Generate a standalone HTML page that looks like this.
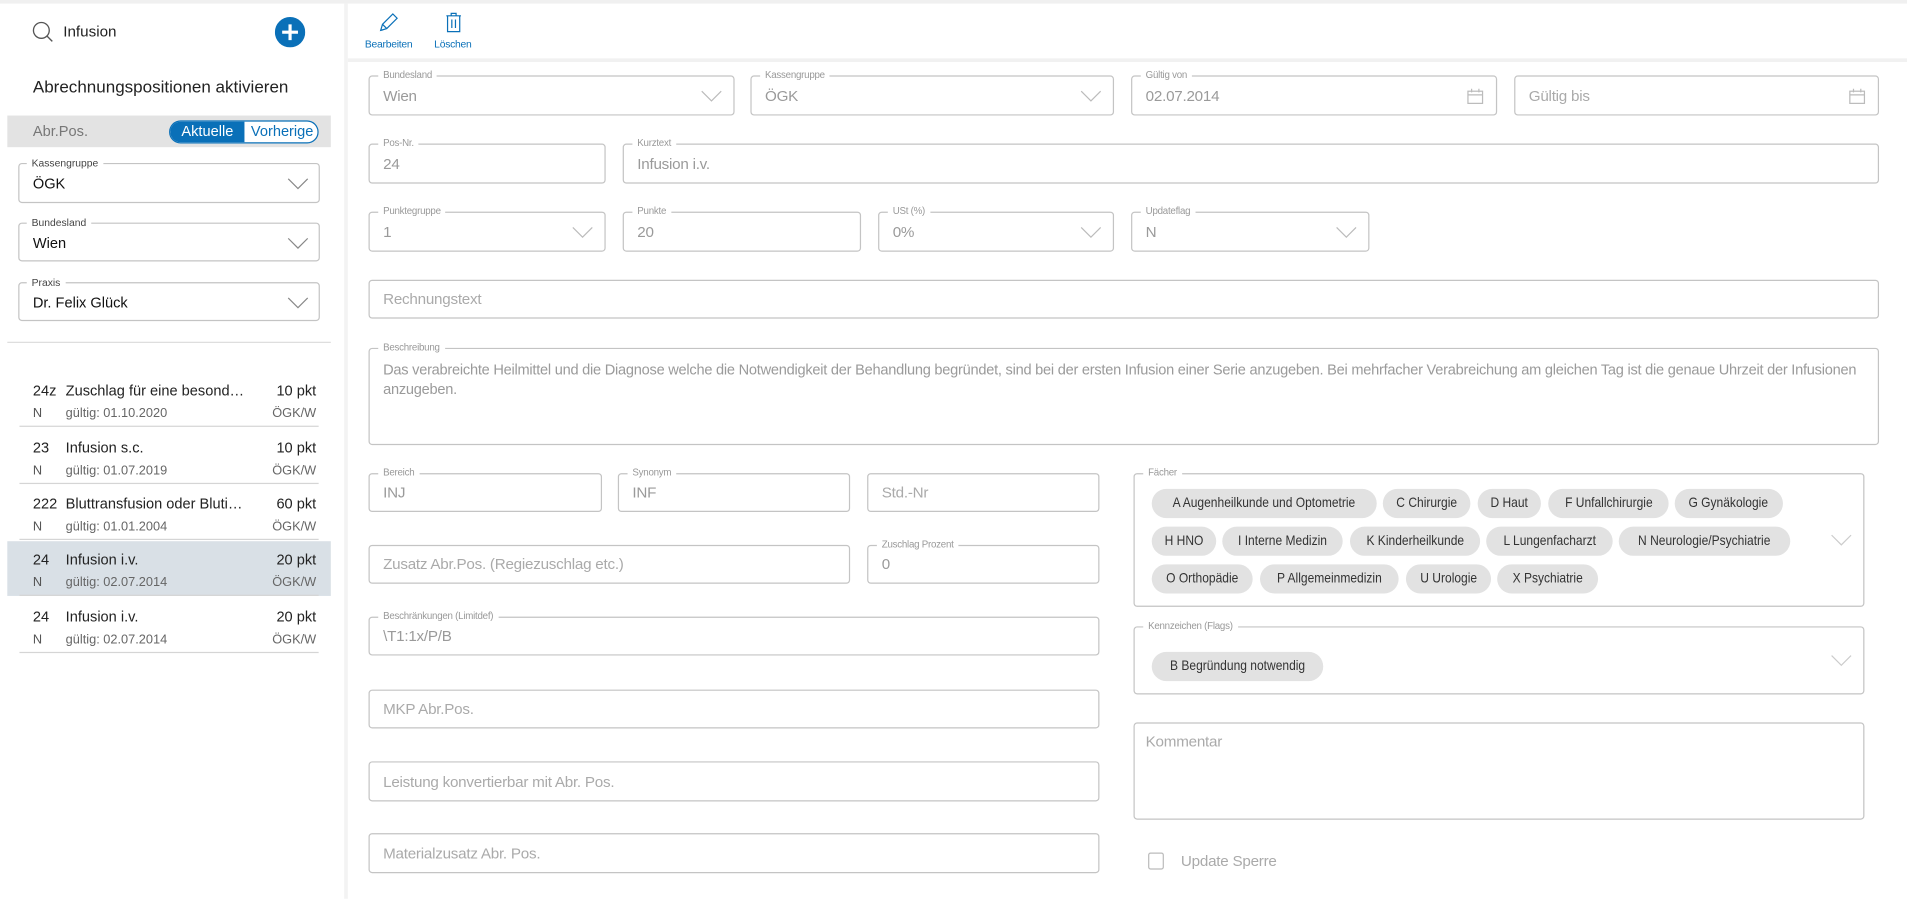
<!DOCTYPE html>
<html><head><meta charset="utf-8">
<style>
*{box-sizing:border-box;margin:0;padding:0}
html,body{width:1907px;height:899px;overflow:hidden;background:#fff}
#s{position:absolute;left:0;top:0;width:1568px;height:739px;transform:scale(1.21620);transform-origin:0 0;font-family:"Liberation Sans",sans-serif;color:#222}
.a{position:absolute}
.f{position:absolute;border:1px solid #c4c4c4;border-radius:3px}
.f .l{position:absolute;top:-6px;left:7px;background:#fff;padding:0 4px;font-size:8px;color:#999;line-height:10px;letter-spacing:-0.2px}
.f .v{position:absolute;left:11px;top:50%;transform:translateY(-50%);font-size:12.5px;color:#9a9a9a;white-space:nowrap;letter-spacing:-0.2px}
.f .v.ph{color:#aaa}
.f .c{position:absolute;right:9px;top:50%;margin-top:-5px}
.lf{position:absolute;border:1px solid #c4c4c4;border-radius:3px}
.lf .l{position:absolute;top:-6px;left:6px;background:#fff;padding:0 4px;font-size:8.5px;color:#444;line-height:10px}
.lf .v{position:absolute;left:11px;top:9px;font-size:12px;color:#111}
.lf .c{position:absolute;right:8px;top:11px}
.row{position:absolute;left:16px;width:246px;height:46px;border-bottom:1px solid #d5d5d5;font-size:12px}
.row .k{position:absolute;left:11px;top:9px;color:#222}
.row .n{position:absolute;left:38px;top:9px;color:#222}
.row .p{position:absolute;right:2px;top:9px;color:#222}
.row .k2{position:absolute;left:11px;top:29px;color:#555;font-size:10.5px}
.row .n2{position:absolute;left:38px;top:29px;color:#666;font-size:10.5px}
.row .p2{position:absolute;right:2px;top:29px;color:#666;font-size:10.5px}
.chip{position:absolute;height:24px;line-height:24px;border-radius:12px;background:#e2e2e2;font-size:11.5px;color:#333;white-space:nowrap;text-align:center}
.chip span{display:inline-block;transform:scaleX(0.86)}
</style></head><body><div id="s">
<div class="a" style="left:0;top:0;width:1568px;height:3px;background:#f0f0f0"></div>
<div class="a" style="left:283px;top:3px;width:3px;height:736px;background:#f3f3f3"></div>
<div class="a" style="left:286px;top:48px;width:1282px;height:3px;background:#f1f1f1"></div>

<!-- left -->
<svg class="a" style="left:26px;top:17px" width="20" height="20" viewBox="0 0 20 20"><circle cx="8" cy="8" r="6.5" fill="none" stroke="#555" stroke-width="1.1"/><line x1="12.8" y1="12.8" x2="17" y2="17" stroke="#555" stroke-width="1.1"/></svg>
<div class="a" style="left:52px;top:19px;font-size:12.5px;color:#222">Infusion</div>
<svg class="a" style="left:226px;top:14px" width="25" height="25" viewBox="0 0 25 25"><circle cx="12.5" cy="12.5" r="12.5" fill="#0a70b8"/><path d="M12.5 6v13M6 12.5h13" stroke="#fff" stroke-width="2.6"/></svg>
<div class="a" style="left:27px;top:63px;font-size:14px;color:#222">Abrechnungspositionen aktivieren</div>
<div class="a" style="left:6px;top:95px;width:266px;height:26px;background:#e3e3e3"></div>
<div class="a" style="left:27px;top:101px;font-size:12px;color:#777">Abr.Pos.</div>
<div class="a" style="left:139px;top:99px;width:123px;height:19px;border:1px solid #0a70b8;border-radius:10px;overflow:hidden;font-size:12px;background:#fff">
<div class="a" style="left:0;top:0;width:61px;height:17px;background:#0a70b8;color:#fff;text-align:center;line-height:17px">Aktuelle</div>
<div class="a" style="left:62px;top:0;width:60px;height:17px;color:#0a70b8;text-align:center;line-height:17px">Vorherige</div></div>

<div class="lf" style="left:15px;top:134px;width:248px;height:33px"><span class="l">Kassengruppe</span><span class="v">ÖGK</span><svg class="c" width="18" height="10"><polyline points="1,1 9,9 17,1" fill="none" stroke="#888"/></svg></div>
<div class="lf" style="left:15px;top:183px;width:248px;height:32px"><span class="l">Bundesland</span><span class="v">Wien</span><svg class="c" width="18" height="10"><polyline points="1,1 9,9 17,1" fill="none" stroke="#888"/></svg></div>
<div class="lf" style="left:15px;top:232px;width:248px;height:32px"><span class="l">Praxis</span><span class="v">Dr. Felix Glück</span><svg class="c" width="18" height="10"><polyline points="1,1 9,9 17,1" fill="none" stroke="#888"/></svg></div>
<div class="a" style="left:6px;top:281px;width:266px;height:1px;background:#ddd"></div>

<div class="row" style="top:305px"><span class="k">24z</span><span class="n">Zuschlag für eine besond…</span><span class="p">10 pkt</span><span class="k2">N</span><span class="n2">gültig: 01.10.2020</span><span class="p2">ÖGK/W</span></div>
<div class="row" style="top:352px"><span class="k">23</span><span class="n">Infusion s.c.</span><span class="p">10 pkt</span><span class="k2">N</span><span class="n2">gültig: 01.07.2019</span><span class="p2">ÖGK/W</span></div>
<div class="row" style="top:398px"><span class="k">222</span><span class="n">Bluttransfusion oder Bluti…</span><span class="p">60 pkt</span><span class="k2">N</span><span class="n2">gültig: 01.01.2004</span><span class="p2">ÖGK/W</span></div>
<div class="a" style="left:6px;top:445px;width:266px;height:45px;background:#d9e0e6"></div>
<div class="row" style="top:444px"><span class="k">24</span><span class="n">Infusion i.v.</span><span class="p">20 pkt</span><span class="k2">N</span><span class="n2">gültig: 02.07.2014</span><span class="p2">ÖGK/W</span></div>
<div class="row" style="top:491px"><span class="k">24</span><span class="n">Infusion i.v.</span><span class="p">20 pkt</span><span class="k2">N</span><span class="n2">gültig: 02.07.2014</span><span class="p2">ÖGK/W</span></div>

<!-- toolbar -->
<svg class="a" style="left:311px;top:9px" width="18" height="18" viewBox="0 0 18 18"><path d="M2 16l1.5-5L12 2.5l3.5 3.5L7 14.5z M3.5 11l3.5 3.5 M2 16l2-0.5" fill="none" stroke="#0a70b8" stroke-width="1"/></svg>
<div class="a" style="left:300px;top:31px;font-size:8.5px;color:#0a70b8;letter-spacing:-0.2px">Bearbeiten</div>
<svg class="a" style="left:365px;top:9px" width="16" height="18" viewBox="0 0 16 18"><path d="M2 4h12 M6 4V2h4v2 M3 4v13h10V4 M6.5 7v7 M9.5 7v7" fill="none" stroke="#0a70b8" stroke-width="1"/></svg>
<div class="a" style="left:357px;top:31px;font-size:8.5px;color:#0a70b8;letter-spacing:-0.2px">Löschen</div>

<!-- right form -->
<div class="f" style="left:303px;top:62px;width:301px;height:33px"><span class="l">Bundesland</span><span class="v">Wien</span><svg class="c" width="18" height="10"><polyline points="1,1 9,9 17,1" fill="none" stroke="#bbb"/></svg></div>
<div class="f" style="left:617px;top:62px;width:299px;height:33px"><span class="l">Kassengruppe</span><span class="v">ÖGK</span><svg class="c" width="18" height="10"><polyline points="1,1 9,9 17,1" fill="none" stroke="#bbb"/></svg></div>
<div class="f" style="left:930px;top:62px;width:301px;height:33px"><span class="l">Gültig von</span><span class="v">02.07.2014</span><svg class="a" style="right:10px;top:9px" width="14" height="14"><rect x="1" y="3" width="12" height="10" fill="none" stroke="#bbb"/><line x1="1" y1="6" x2="13" y2="6" stroke="#bbb"/><path d="M4 1v3M10 1v3" stroke="#bbb"/></svg></div>
<div class="f" style="left:1245px;top:62px;width:300px;height:33px"><span class="v ph">Gültig bis</span><svg class="a" style="right:10px;top:9px" width="14" height="14"><rect x="1" y="3" width="12" height="10" fill="none" stroke="#bbb"/><line x1="1" y1="6" x2="13" y2="6" stroke="#bbb"/><path d="M4 1v3M10 1v3" stroke="#bbb"/></svg></div>

<div class="f" style="left:303px;top:118px;width:195px;height:33px"><span class="l">Pos-Nr.</span><span class="v">24</span></div>
<div class="f" style="left:512px;top:118px;width:1033px;height:33px"><span class="l">Kurztext</span><span class="v">Infusion i.v.</span></div>

<div class="f" style="left:303px;top:174px;width:195px;height:33px"><span class="l">Punktegruppe</span><span class="v">1</span><svg class="c" width="18" height="10"><polyline points="1,1 9,9 17,1" fill="none" stroke="#bbb"/></svg></div>
<div class="f" style="left:512px;top:174px;width:196px;height:33px"><span class="l">Punkte</span><span class="v">20</span></div>
<div class="f" style="left:722px;top:174px;width:194px;height:33px"><span class="l">USt (%)</span><span class="v">0%</span><svg class="c" width="18" height="10"><polyline points="1,1 9,9 17,1" fill="none" stroke="#bbb"/></svg></div>
<div class="f" style="left:930px;top:174px;width:196px;height:33px"><span class="l">Updateflag</span><span class="v">N</span><svg class="c" width="18" height="10"><polyline points="1,1 9,9 17,1" fill="none" stroke="#bbb"/></svg></div>

<div class="f" style="left:303px;top:230px;width:1242px;height:32px"><span class="v ph">Rechnungstext</span></div>
<div class="f" style="left:303px;top:286px;width:1242px;height:80px"><span class="l">Beschreibung</span><div class="a" style="left:11px;top:9px;right:10px;font-size:12px;line-height:16px;color:#9a9a9a;letter-spacing:-0.2px">Das verabreichte Heilmittel und die Diagnose welche die Notwendigkeit der Behandlung begründet, sind bei der ersten Infusion einer Serie anzugeben. Bei mehrfacher Verabreichung am gleichen Tag ist die genaue Uhrzeit der Infusionen anzugeben.</div></div>

<div class="f" style="left:303px;top:389px;width:192px;height:32px"><span class="l">Bereich</span><span class="v">INJ</span></div>
<div class="f" style="left:508px;top:389px;width:191px;height:32px"><span class="l">Synonym</span><span class="v">INF</span></div>
<div class="f" style="left:713px;top:389px;width:191px;height:32px"><span class="v ph">Std.-Nr</span></div>
<div class="f" style="left:303px;top:448px;width:396px;height:32px"><span class="v ph">Zusatz Abr.Pos. (Regiezuschlag etc.)</span></div>
<div class="f" style="left:713px;top:448px;width:191px;height:32px"><span class="l">Zuschlag Prozent</span><span class="v">0</span></div>
<div class="f" style="left:303px;top:507px;width:601px;height:32px"><span class="l">Beschränkungen (Limitdef)</span><span class="v">\T1:1x/P/B</span></div>
<div class="f" style="left:303px;top:567px;width:601px;height:32px"><span class="v ph">MKP Abr.Pos.</span></div>
<div class="f" style="left:303px;top:626px;width:601px;height:33px"><span class="v ph">Leistung konvertierbar mit Abr. Pos.</span></div>
<div class="f" style="left:303px;top:685px;width:601px;height:33px"><span class="v ph">Materialzusatz Abr. Pos.</span></div>

<div class="f" style="left:932px;top:389px;width:601px;height:110px"><span class="l">Fächer</span>
<div class="chip" style="left:14px;top:12px;width:185px"><span>A Augenheilkunde und Optometrie</span></div>
<div class="chip" style="left:204px;top:12px;width:72px"><span>C Chirurgie</span></div>
<div class="chip" style="left:282px;top:12px;width:52px"><span>D Haut</span></div>
<div class="chip" style="left:340px;top:12px;width:99px"><span>F Unfallchirurgie</span></div>
<div class="chip" style="left:444px;top:12px;width:89px"><span>G Gynäkologie</span></div>
<div class="chip" style="left:14px;top:43px;width:53px"><span>H HNO</span></div>
<div class="chip" style="left:72px;top:43px;width:99px"><span>I Interne Medizin</span></div>
<div class="chip" style="left:177px;top:43px;width:107px"><span>K Kinderheilkunde</span></div>
<div class="chip" style="left:289px;top:43px;width:104px"><span>L Lungenfacharzt</span></div>
<div class="chip" style="left:398px;top:43px;width:141px"><span>N Neurologie/Psychiatrie</span></div>
<div class="chip" style="left:14px;top:74px;width:83px"><span>O Orthopädie</span></div>
<div class="chip" style="left:103px;top:74px;width:114px"><span>P Allgemeinmedizin</span></div>
<div class="chip" style="left:223px;top:74px;width:70px"><span>U Urologie</span></div>
<div class="chip" style="left:298px;top:74px;width:83px"><span>X Psychiatrie</span></div>
<svg class="c" width="18" height="10"><polyline points="1,1 9,9 17,1" fill="none" stroke="#ccc"/></svg></div>

<div class="f" style="left:932px;top:515px;width:601px;height:56px"><span class="l">Kennzeichen (Flags)</span>
<div class="chip" style="left:14px;top:20px;width:141px"><span>B Begründung notwendig</span></div>
<svg class="c" width="18" height="10"><polyline points="1,1 9,9 17,1" fill="none" stroke="#ccc"/></svg></div>

<div class="f" style="left:932px;top:594px;width:601px;height:80px"><span class="a" style="left:9px;top:8px;font-size:12.5px;color:#aaa;letter-spacing:-0.2px">Kommentar</span></div>
<div class="a" style="left:944px;top:701px;width:13px;height:14px;border:1.5px solid #bbb;border-radius:2px"></div>
<div class="a" style="left:971px;top:701px;font-size:12.5px;color:#aaa;letter-spacing:-0.2px">Update Sperre</div>
</div></body></html>
